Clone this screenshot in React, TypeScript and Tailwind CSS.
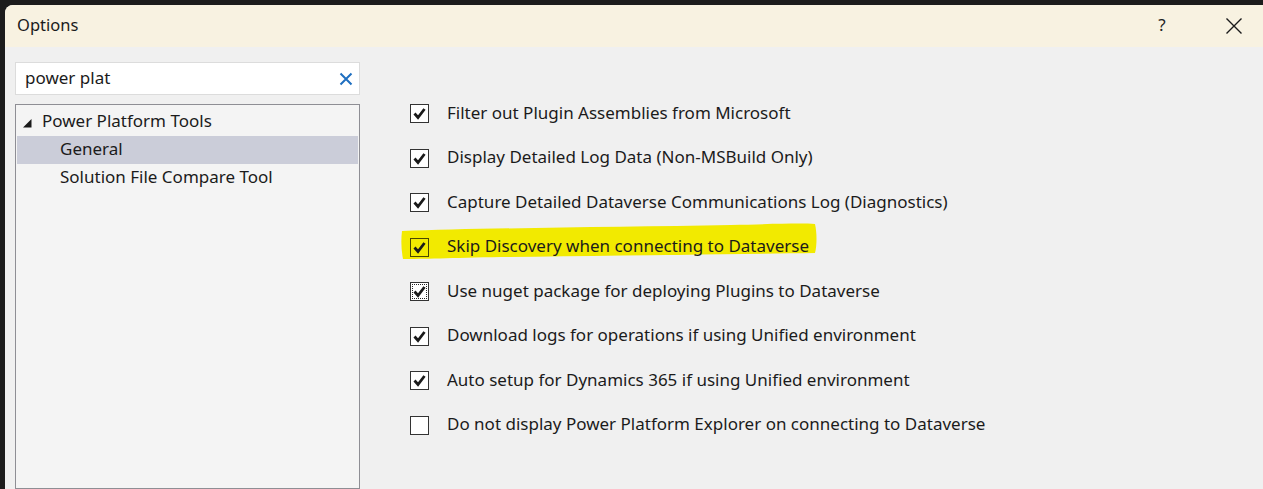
import React from "react";

const font = { fontFamily: '"Noto Sans", "Open Sans", sans-serif' };

function Check({ checked, focus, hl }: { checked: boolean; focus?: boolean; hl?: boolean }) {
  return (
    <div
      className={`relative w-[19px] h-[19px] border ${hl ? "border-[#4a4700] bg-[#f2ea00]" : "border-[#333333] bg-white"} flex items-center justify-center`}
    >
      {focus && <div className="absolute inset-[1px] border border-dotted border-[#222]" />}
      {checked && (
        <svg width="15" height="15" viewBox="0 0 15 15" className="relative">
          <path d="M2.5 7.5 L6 11.5 L12.5 3" fill="none" stroke="#1a1a1a" strokeWidth="2.8" strokeLinejoin="miter" />
        </svg>
      )}
    </div>
  );
}

const items = [
  { t: "Filter out Plugin Assemblies from Microsoft", c: true },
  { t: "Display Detailed Log Data (Non-MSBuild Only)", c: true },
  { t: "Capture Detailed Dataverse Communications Log (Diagnostics)", c: true },
  { t: "Skip Discovery when connecting to Dataverse", c: true, hl: true },
  { t: "Use nuget package for deploying Plugins to Dataverse", c: true, focus: true },
  { t: "Download logs for operations if using Unified environment", c: true },
  { t: "Auto setup for Dynamics 365 if using Unified environment", c: true },
  { t: "Do not display Power Platform Explorer on connecting to Dataverse", c: false },
];

export default function App() {
  return (
    <div className="w-[1263px] h-[489px] bg-[#1c1c1c] pt-[5px] pl-[5px] overflow-hidden" style={font}>
      <div className="w-full h-full rounded-tl-[8px] overflow-hidden bg-[#f0f0f0] flex flex-col text-[#1b1b1b]">
        <div className="h-[42px] bg-[#f8f2e1] flex items-center shrink-0">
          <div className="pl-[12px] text-[16.5px] pb-[2px]">Options</div>
          <div className="flex-1" />
          <div className="w-[60px] text-center text-[17px] pb-[2px] text-[#222] mr-[18px]">?</div>
          <div className="w-[48px] flex items-center justify-center mr-[5px]">
            <svg width="18" height="18" viewBox="0 0 18 18">
              <path d="M1.5 1.5 L16.5 16.5 M16.5 1.5 L1.5 16.5" stroke="#1a1a1a" strokeWidth="1.4" />
            </svg>
          </div>
        </div>
        <div className="flex flex-1">
          <div className="w-[345px] ml-[10px] mt-[15px] flex flex-col">
            <div className="h-[33px] bg-white border border-[#dcdcdc] flex items-center pl-[9px] pr-[6px]">
              <div className="flex-1 text-[17px] pt-[1px] pb-[2px]">power plat</div>
              <svg width="14" height="14" viewBox="0 0 14 14">
                <path d="M1.5 1.5 L12.5 12.5 M12.5 1.5 L1.5 12.5" stroke="#1f6fc0" strokeWidth="2" />
              </svg>
            </div>
            <div className="mt-[9px] flex-1 bg-[#f4f4f4] border border-[#8e8e94] pt-[3px] px-[1px]">
              <div className="h-[28px] flex items-center text-[17px]">
                <svg width="12" height="12" viewBox="0 0 12 12" className="ml-[4px] mr-[9px] mt-[1px]">
                  <path d="M10.5 2 L10.5 10.5 L2 10.5 Z" fill="#1a1a1a" />
                </svg>
                <span className="pb-[2px]">Power Platform Tools</span>
              </div>
              <div className="h-[28px] flex items-center bg-[#cbcdd9] pl-[43px] text-[17px]">
                <span className="pb-[2px]">General</span>
              </div>
              <div className="h-[28px] flex items-center pl-[43px] text-[17px]">
                <span className="pb-[2px]">Solution File Compare Tool</span>
              </div>
            </div>
          </div>
          <div className="relative flex-1 pl-[50px] pt-[57px] flex flex-col gap-[25.5px]">
            <svg
              className="absolute left-[41px] top-[176px]"
              width="416"
              height="37"
              viewBox="0 0 416 37"
            >
              <path
                d="M1 8 C80 5 220 4 330 2 C370 1 400 0 414 1 C416 10 416 22 414 30 C330 31 200 33 100 34 C50 35 20 36 2 36 C0 26 0 16 1 8 Z"
                fill="#f2ea00"
              />
            </svg>
            {items.map((it, i) => (
              <div key={i} className="relative flex items-center h-[19px]">
                <Check checked={it.c} focus={it.focus} hl={it.hl} />
                <span className="ml-[18px] text-[17px] pb-[2px] whitespace-nowrap">{it.t}</span>
              </div>
            ))}
          </div>
        </div>
      </div>
    </div>
  );
}
